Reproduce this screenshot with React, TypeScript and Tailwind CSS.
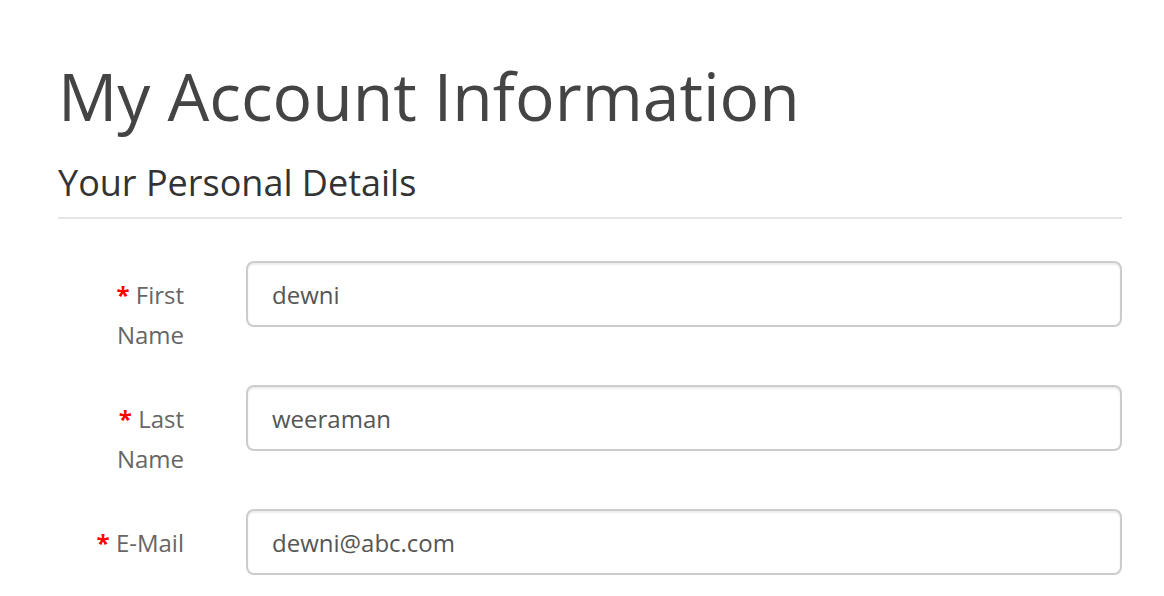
const fields = [
  { label: "First Name", value: "dewni" },
  { label: "Last Name", value: "weeraman" },
  { label: "E-Mail", value: "dewni@abc.com" },
];

export default function App() {
  return (
    <div className="min-h-screen bg-white pl-[58px] pr-[42px] font-['Open_Sans',sans-serif]">
      <h1 className="pt-[52px] text-[66px] leading-[86px] font-normal text-[#444]">My Account Information</h1>
      <fieldset>
        <legend className="w-full border-b-2 border-[#e5e5e5] pt-[20px] pb-[9px] text-[36px] leading-[50px] text-[#333]">
          Your Personal Details
        </legend>
        <div className="mt-[42px] flex flex-col gap-[30px]">
          {fields.map((f) => (
            <div key={f.label} className="flex items-start">
              <label className="w-[126px] pt-[14px] text-right text-[24px] leading-[40px] text-[#666]">
                <span className="font-bold text-[#f00]">* </span>
                {f.label}
              </label>
              <input
                readOnly
                value={f.value}
                className="ml-[62px] h-[66px] flex-1 rounded-[8px] border-2 border-[#ccc] bg-white px-[24px] text-[24px] text-[#555] shadow-[inset_0_2px_2px_rgba(0,0,0,0.075)] outline-none"
              />
            </div>
          ))}
        </div>
      </fieldset>
    </div>
  );
}
